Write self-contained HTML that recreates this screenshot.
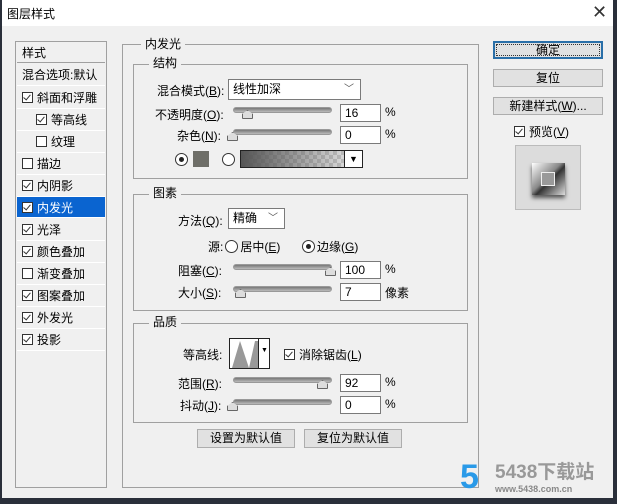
<!DOCTYPE html>
<html><head><meta charset="utf-8"><style>
*{box-sizing:border-box;margin:0;padding:0}
body{width:617px;height:504px;overflow:hidden;background:#2a2f3a;font-family:"Liberation Sans","Noto Sans CJK SC",sans-serif;font-size:12px;color:#000;position:relative}
.win{position:absolute;left:2px;top:0;width:611px;height:498px;background:#f0f0f0}
.title{position:absolute;left:0;top:0;width:611px;height:26px;background:#fff}
.a{position:absolute;white-space:nowrap}
.box{position:absolute;border:1px solid #a0a0a0}
.gt{position:absolute;background:#f0f0f0;padding:0 4px;line-height:14px}
.cb{display:inline-block;width:11px;height:11px;border:1px solid #333;background:#fff;vertical-align:-1px;margin-right:4px;position:relative}
.cb.c::after{content:"";position:absolute;left:2px;top:0px;width:3px;height:6px;border:solid #333;border-width:0 1.3px 1.3px 0;transform:rotate(40deg)}
.li{position:absolute;left:1px;width:88px;height:22px;line-height:22px;border-bottom:1px solid #fff;padding-left:5px}
.inp{position:absolute;background:#fff;border:1px solid #7a7a7a;height:18px;line-height:16px;padding-left:4px}
.sl{position:absolute;height:6px;border-radius:3px;background:linear-gradient(#777,#bbb);border:1px solid #999}
.th{position:absolute;top:4px;width:11px;height:9px;background:#ddd;border:1px solid #666;border-radius:2px 2px 1px 1px;clip-path:polygon(50% 0,100% 45%,100% 100%,0 100%,0 45%)}
.btn{position:absolute;background:#e1e1e1;border:1px solid #adadad;text-align:center;line-height:16px}
.rad{display:inline-block;width:13px;height:13px;border:1px solid #333;border-radius:50%;background:#fff;vertical-align:-2px;position:relative}
.rad.on::after{content:"";position:absolute;left:3px;top:3px;width:5px;height:5px;border-radius:50%;background:#222}
</style></head><body>
<div class="win">
<div class="title"></div>
<div class="a" style="left:5px;top:5px">图层样式</div>
<div class="a" style="left:590px;top:2px;font-size:18px;color:#333">✕</div>

<div class="box" style="left:13px;top:41px;width:92px;height:447px;background:#f0f0f0">
<div class="li" style="top:0;height:21px;border-bottom:1px solid #a0a0a0">样式</div>
<div class="li" style="top:22px">混合选项:默认</div>
<div class="li" style="top:45px"><span class="cb c"></span>斜面和浮雕</div>
<div class="li" style="top:67px;padding-left:19px"><span class="cb c"></span>等高线</div>
<div class="li" style="top:89px;padding-left:19px"><span class="cb"></span>纹理</div>
<div class="li" style="top:111px"><span class="cb"></span>描边</div>
<div class="li" style="top:133px"><span class="cb c"></span>内阴影</div>
<div class="li" style="top:155px;background:#0a64d0;color:#fff;height:21px"><span class="cb c"></span>内发光</div>
<div class="li" style="top:177px"><span class="cb c"></span>光泽</div>
<div class="li" style="top:199px"><span class="cb c"></span>颜色叠加</div>
<div class="li" style="top:221px"><span class="cb"></span>渐变叠加</div>
<div class="li" style="top:243px"><span class="cb c"></span>图案叠加</div>
<div class="li" style="top:265px"><span class="cb c"></span>外发光</div>
<div class="li" style="top:287px"><span class="cb c"></span>投影</div>
</div>

<div class="box" style="left:120px;top:44px;width:357px;height:444px"></div>
<div class="gt" style="left:139px;top:37px">内发光</div>

<div class="box" style="left:131px;top:64px;width:335px;height:115px"></div>
<div class="gt" style="left:147px;top:56px">结构</div>
<div class="a" style="left:155px;top:82px">混合模式(<u>B</u>):</div>
<div class="inp" style="left:226px;top:79px;width:133px;height:21px;line-height:19px">线性加深<span style="position:absolute;right:6px;color:#555;font-size:10px">﹀</span></div>
<div class="a" style="left:153px;top:106px">不透明度(<u>O</u>):</div>
<div class="sl" style="left:231px;top:107px;width:99px"></div><div class="th" style="left:240px;top:110px"></div>
<div class="inp" style="left:338px;top:104px;width:41px">16</div><div class="a" style="left:383px;top:105px">%</div>
<div class="a" style="left:175px;top:127px">杂色(<u>N</u>):</div>
<div class="sl" style="left:231px;top:129px;width:99px"></div><div class="th" style="left:225px;top:132px"></div>
<div class="inp" style="left:338px;top:126px;width:41px">0</div><div class="a" style="left:383px;top:127px">%</div>
<span class="rad on" style="position:absolute;left:173px;top:153px"></span>
<div style="position:absolute;left:191px;top:151px;width:16px;height:16px;background:#6e6e68"></div>
<span class="rad" style="position:absolute;left:220px;top:153px"></span>
<div style="position:absolute;left:238px;top:150px;width:123px;height:18px;border:1px solid #222;background:linear-gradient(90deg,#555,rgba(200,200,200,.3)),repeating-conic-gradient(#ccc 0 25%,#fff 0 50%) 0 0/8px 8px"></div>
<div style="position:absolute;left:342px;top:150px;width:19px;height:18px;border:1px solid #222;background:#fff;text-align:center;font-size:9px;line-height:16px">▼</div>

<div class="box" style="left:131px;top:194px;width:335px;height:117px"></div>
<div class="gt" style="left:147px;top:186px">图素</div>
<div class="a" style="left:176px;top:212px">方法(<u>Q</u>):</div>
<div class="inp" style="left:226px;top:208px;width:57px;height:21px;line-height:19px">精确<span style="position:absolute;right:6px;color:#555;font-size:10px">﹀</span></div>
<div class="a" style="left:206px;top:238px">源:<span class="rad" style="margin:0 2px"></span>居中(<u>E</u>)</div>
<div class="a" style="left:300px;top:238px"><span class="rad on" style="margin-right:2px"></span>边缘(<u>G</u>)</div>
<div class="a" style="left:176px;top:262px">阻塞(<u>C</u>):</div>
<div class="sl" style="left:231px;top:264px;width:99px"></div><div class="th" style="left:323px;top:267px"></div>
<div class="inp" style="left:338px;top:261px;width:41px">100</div><div class="a" style="left:383px;top:262px">%</div>
<div class="a" style="left:176px;top:284px">大小(<u>S</u>):</div>
<div class="sl" style="left:231px;top:286px;width:99px"></div><div class="th" style="left:233px;top:289px"></div>
<div class="inp" style="left:338px;top:283px;width:41px">7</div><div class="a" style="left:383px;top:284px">像素</div>

<div class="box" style="left:131px;top:323px;width:335px;height:100px"></div>
<div class="gt" style="left:147px;top:315px">品质</div>
<div class="a" style="left:181px;top:346px">等高线:</div>
<div style="position:absolute;left:227px;top:338px;width:41px;height:31px;border:1px solid #222;background:#fff">
<svg width="28" height="29" style="position:absolute;left:0;top:0"><path d="M2 29 L10 2 L19 29 L25 2 L28 2 L28 29 Z" fill="#999"/></svg>
<div style="position:absolute;left:28px;top:0;width:1px;height:29px;background:#222"></div>
<div style="position:absolute;left:31px;top:8px;font-size:7px">▼</div></div>
<div class="a" style="left:282px;top:346px"><span class="cb c"></span>消除锯齿(<u>L</u>)</div>
<div class="a" style="left:176px;top:375px">范围(<u>R</u>):</div>
<div class="sl" style="left:231px;top:377px;width:99px"></div><div class="th" style="left:315px;top:380px"></div>
<div class="inp" style="left:338px;top:374px;width:41px">92</div><div class="a" style="left:383px;top:375px">%</div>
<div class="a" style="left:178px;top:397px">抖动(<u>J</u>):</div>
<div class="sl" style="left:231px;top:399px;width:99px"></div><div class="th" style="left:225px;top:402px"></div>
<div class="inp" style="left:338px;top:396px;width:41px">0</div><div class="a" style="left:383px;top:397px">%</div>

<div class="btn" style="left:195px;top:429px;width:98px;height:19px">设置为默认值</div>
<div class="btn" style="left:302px;top:429px;width:98px;height:19px">复位为默认值</div>

<div class="btn" style="left:491px;top:41px;width:110px;height:18px;border:2px solid #2a6fa8;outline:1px dotted #333;outline-offset:-4px;line-height:14px">确定</div>
<div class="btn" style="left:491px;top:69px;width:110px;height:18px">复位</div>
<div class="btn" style="left:491px;top:97px;width:110px;height:18px">新建样式(<u>W</u>)...</div>
<div class="a" style="left:512px;top:123px"><span class="cb c"></span>预览(<u>V</u>)</div>
<div style="position:absolute;left:513px;top:145px;width:66px;height:65px;border:1px solid #bbb;background:#dcdcdc">
<div style="position:absolute;left:16px;top:17px;width:33px;height:32px;background:linear-gradient(135deg,#fff,#888 45%,#333 55%,#ddd);box-shadow:0 3px 4px #555"><div style="position:absolute;left:9px;top:9px;width:14px;height:14px;background:#999;border:1px solid #eee"></div></div></div>

<div class="a" style="left:458px;top:460px;font-size:34px;font-weight:bold;color:#2a9ae8;line-height:34px">5</div>
<div class="a" style="left:493px;top:463px;font-size:19px;font-weight:bold;color:#999;line-height:20px">5438下载站</div>
<div class="a" style="left:493px;top:484px;font-size:9px;font-weight:bold;color:#888">www.5438.com.cn</div>
</div>
</body></html>
